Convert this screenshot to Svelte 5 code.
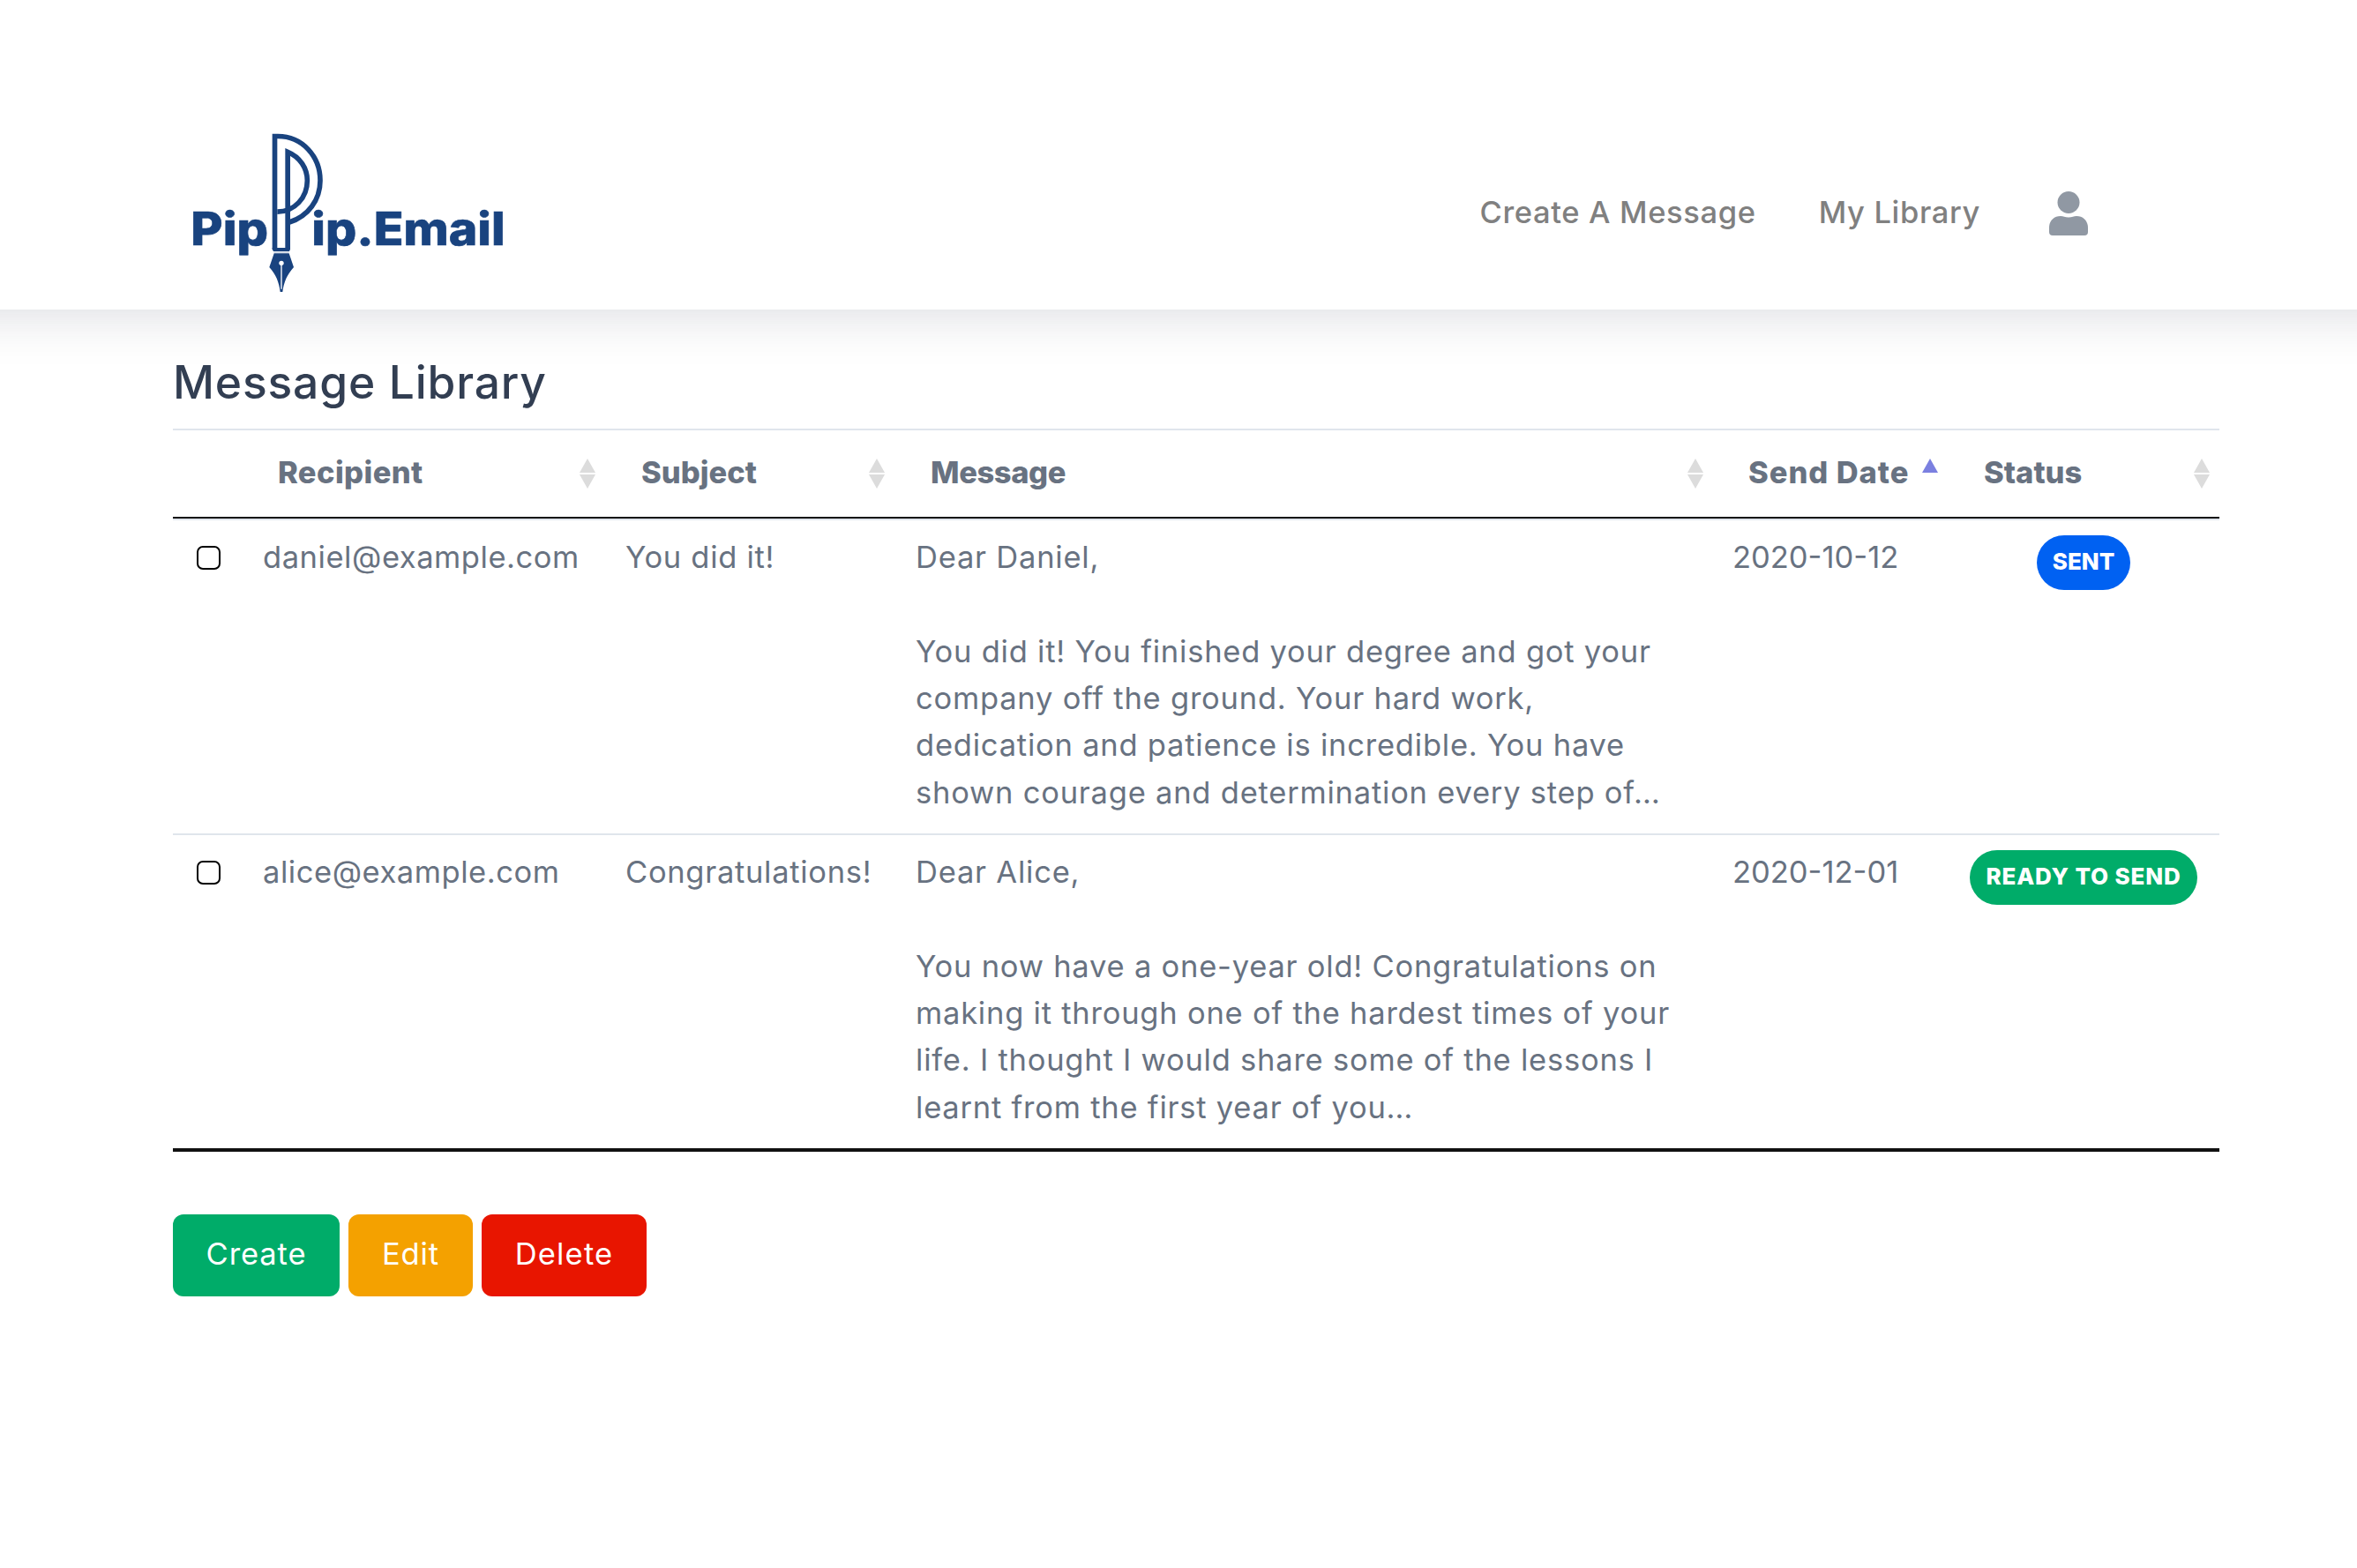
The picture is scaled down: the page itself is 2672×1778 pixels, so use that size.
<script>
  const links = ['Create A Message', 'My Library'];

  const columns = [
    { key: 'recipient', label: 'Recipient', sort: 'both' },
    { key: 'subject', label: 'Subject', sort: 'both' },
    { key: 'message', label: 'Message', sort: 'both' },
    { key: 'date', label: 'Send Date', sort: 'asc' },
    { key: 'status', label: 'Status', sort: 'both' }
  ];

  let messages = [
    {
      recipient: 'daniel@example.com',
      subject: 'You did it!',
      lines: [
        'Dear Daniel,',
        '',
        'You did it! You finished your degree and got your',
        'company off the ground. Your hard work,',
        'dedication and patience is incredible. You have',
        'shown courage and determination every step of…'
      ],
      date: '2020-10-12',
      status: 'SENT',
      kind: 'primary',
      selected: false
    },
    {
      recipient: 'alice@example.com',
      subject: 'Congratulations!',
      lines: [
        'Dear Alice,',
        '',
        'You now have a one-year old! Congratulations on',
        'making it through one of the hardest times of your',
        'life. I thought I would share some of the lessons I',
        'learnt from the first year of you…'
      ],
      date: '2020-12-01',
      status: 'READY TO SEND',
      kind: 'success',
      selected: false
    }
  ];
</script>

<header class="topbar">
  <a class="brand" href="#home" aria-label="PipPip.Email">
    <svg viewBox="0 0 1170 600" width="390" height="200">
      <g class="logo-text">
        <text x="49" y="415" textLength="263" lengthAdjust="spacingAndGlyphs">Pip</text>
        <text x="460" y="415" textLength="658" lengthAdjust="spacingAndGlyphs">ip.Email</text>
      </g>
      <g class="logo-line">
        <path d="M334.5 427V43.5H345C428 43.5 489 112 489 194C489 261 447 316 384 336" />
        <path d="M378.5 427V97C420 114 445 152 445 194C445 252 402 300 343 300.5" />
      </g>
      <path class="logo-fill" d="M326 423H387V428L384 435H330L326 428Z" />
      <path class="logo-hair" d="M331 438.500H383" />
      <path class="logo-fill" d="M332 442H383L399 489C376 514 365 541 361 573H353C349 541 339 514 316 489Z" />
      <circle cx="357" cy="475" r="8" fill="#fff" />
      <path d="M357 480V563" stroke="#fff" stroke-width="4" />
    </svg>
  </a>
  <nav class="nav">
    {#each links as link}
      <a class="nav-link" href="#nav">{link}</a>
    {/each}
    <a class="nav-user" href="#account" aria-label="Account">
      <svg viewBox="0 0 44 50" width="44" height="50">
        <circle cx="22" cy="12.500" r="12.500" />
        <path d="M13 28C16 28 18 29.500 22 29.500S28 28 31 28C39 28 44 34 44 41V46Q44 50 40 50H4Q0 50 0 46V41C0 34 5 28 13 28Z" />
      </svg>
    </a>
  </nav>
</header>

<main class="content">
  <h1>Message Library</h1>

  <table>
    <colgroup>
      <col class="col-check" />
      {#each columns as column}
        <col class="col-{column.key}" />
      {/each}
    </colgroup>
    <thead>
      <tr>
        <th></th>
        {#each columns as column}
          <th>
            <div class="heading heading-{column.key}">
              <span>{column.label}</span>
              <svg class="sort" viewBox="0 0 18 34" width="18" height="34">
                {#if column.sort === 'asc'}
                  <path class="sort-active" d="M9 0L18 16H0Z" />
                {:else}
                  <path d="M9 0L18 16H0ZM0 18H18L9 34Z" />
                {/if}
              </svg>
            </div>
          </th>
        {/each}
      </tr>
    </thead>
    <tbody>
      {#each messages as message}
        <tr>
          <td class="check"><input type="checkbox" aria-label="Select message" bind:checked={message.selected} /></td>
          <td class="recipient">{message.recipient}</td>
          <td class="subject">{message.subject}</td>
          <td class="message">{message.lines.join('\n')}</td>
          <td class="date">{message.date}</td>
          <td class="status"><span class="badge badge-{message.kind}">{message.status}</span></td>
        </tr>
      {/each}
    </tbody>
  </table>

  <div class="actions">
    <button class="btn btn-create">Create</button>
    <button class="btn btn-edit">Edit</button>
    <button class="btn btn-delete">Delete</button>
  </div>
</main>

<style>
  :global(body) {
    margin: 0;
    overflow-x: hidden;
    background: #fff;
    color: #687281;
    font-family: Inter, 'Liberation Sans', sans-serif;
    font-size: 34.5px;
    line-height: 53.33px;
  }

  /* wider than the window, so the shadow does not fade at the sides */
  .topbar {
    box-sizing: border-box;
    height: 351px;
    margin: 0 -80px;
    padding: 140px 385px 0 280px;
    display: flex;
    justify-content: space-between;
    align-items: flex-start;
    background: #fff;
    box-shadow: 0 5px 56px rgba(31, 40, 65, 0.16);
  }

  .brand svg {
    display: block;
  }

  .logo-text {
    font-size: 155px;
    font-weight: 800;
    fill: #19437f;
    stroke: #19437f;
    stroke-width: 2;
  }

  .logo-line {
    fill: none;
    stroke: #19437f;
    stroke-width: 17;
  }

  .logo-fill {
    fill: #19437f;
  }

  .logo-hair {
    stroke: #8ca1bf;
    stroke-width: 2;
  }

  .nav {
    display: flex;
    align-items: center;
    padding-top: 74px;
  }

  .nav-link {
    margin-right: 71px;
    color: #808080;
    font-weight: 500;
    text-decoration: none;
    white-space: nowrap;
    letter-spacing: 0.65px;
  }

  .nav-user {
    display: flex;
    margin-left: 7px;
    padding-top: 2px;
  }

  .nav-user svg {
    fill: #9098a3;
  }

  .content {
    width: 2320px;
    padding: 49px 0 0 196px;
  }

  h1 {
    margin: 0;
    height: 86px;
    color: #323e52;
    font-size: 51.5px;
    font-weight: 500;
    line-height: 66px;
    letter-spacing: 0.85px;
  }

  table {
    width: 2320px;
    table-layout: fixed;
    border-collapse: separate;
    border-spacing: 0;
    border-bottom: 4px solid #111;
  }

  .col-check {
    width: 78px;
  }

  .col-recipient {
    width: 412px;
  }

  .col-subject {
    width: 328px;
  }

  .col-message {
    width: 928px;
  }

  .col-date {
    width: 266px;
  }

  .col-status {
    width: 308px;
  }

  th {
    height: 98px;
    padding: 0;
    border-top: 2px solid #e0e5ec;
    border-bottom: 2px solid #111;
    font-weight: 800;
    text-align: left;
  }

  .heading {
    display: flex;
    justify-content: space-between;
    align-items: center;
    padding: 0 11px 0 41px;
    white-space: nowrap;
  }

  .heading span {
    padding-bottom: 3px;
  }

  .heading-recipient {
    letter-spacing: 0.4px;
  }

  .heading-message {
    letter-spacing: -0.4px;
  }

  .heading-date {
    padding-left: 40px;
    letter-spacing: 0.95px;
  }

  .sort {
    fill: #dcdcdc;
  }

  .sort-active {
    fill: #7b80e0;
  }

  td {
    box-sizing: border-box;
    height: 357px;
    padding: 15px 24px 18px;
    border-top: 2px solid #e0e5ec;
    vertical-align: top;
    white-space: nowrap;
  }

  .check {
    padding-left: 27px;
    padding-right: 0;
  }

  .check input {
    appearance: none;
    display: block;
    box-sizing: border-box;
    width: 27px;
    height: 27px;
    margin: 14px 0 0;
    border: 2px solid #000;
    border-radius: 7px;
    background: #fff;
  }

  .recipient {
    letter-spacing: 0.55px;
  }

  .subject {
    padding-left: 23px;
    letter-spacing: 0.7px;
  }

  .message {
    white-space: pre;
    letter-spacing: 0.78px;
  }

  .date {
    padding-left: 22px;
  }

  .status {
    padding: 17px 0 0;
    text-align: center;
  }

  .badge {
    display: inline-block;
    box-sizing: border-box;
    height: 62px;
    padding: 0 18px;
    border-radius: 31px;
    color: #fff;
    font-size: 26px;
    font-weight: 800;
    line-height: 59px;
  }

  .badge-primary {
    background: #0061f2;
  }

  .badge-success {
    background: #00ac69;
    letter-spacing: 0.85px;
  }

  .actions {
    display: flex;
    gap: 10px;
    margin-top: 71px;
  }

  .btn {
    height: 93px;
    padding: 0 0 3px;
    border: 0;
    border-radius: 12px;
    color: #fff;
    font: inherit;
    letter-spacing: 0.9px;
  }

  .btn-create {
    width: 189px;
    background: #00ac69;
  }

  .btn-edit {
    width: 141px;
    background: #f4a100;
  }

  .btn-delete {
    width: 187px;
    background: #e81500;
    letter-spacing: 1.2px;
  }
</style>
